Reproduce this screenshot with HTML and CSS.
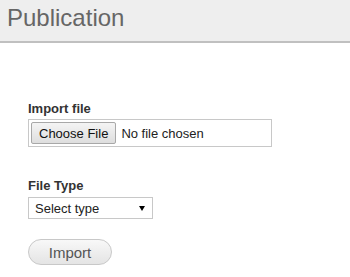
FILE: index.html
```html
<!DOCTYPE html>
<html lang="en">
<head>
    <meta charset="utf-8" />
    <title>Publication</title>
    <link rel="stylesheet" href="styles.css">
</head>
<body>
    <header class="page-header">
        <h1 class="page-title">Publication</h1>
    </header>

    <main class="import-form">
        <div class="form-field">
            <label class="field-label" for="importFile">Import file</label>
            <input class="file-input" id="importFile" type="file" />
        </div>

        <div class="form-field">
            <label class="field-label" for="fileType">File Type</label>
            <span class="select-wrap">
                <select class="type-select" id="fileType">
                    <option>Select type</option>
                    <option>CSV</option>
                    <option>XML</option>
                </select>
            </span>
        </div>

        <button class="import-button" type="button">Import</button>
    </main>
</body>
</html>
```

FILE: styles.css
```css
* {
    margin: 0;
    padding: 0;
    box-sizing: border-box;
}

body {
    font-family: "Liberation Sans", Arial, sans-serif;
    font-size: 13px;
    color: #333;
    background: #fff;
}

.page-header {
    height: 43px;
    background: #eeeeee;
    border-bottom: 2px solid #c0c0c0;
    padding: 4px 7px 0;
}

.page-title {
    font-size: 24px;
    font-weight: normal;
    line-height: 28px;
    color: #666;
}

.import-form {
    padding: 58px 28px 0;
    display: flex;
    flex-direction: column;
    align-items: flex-start;
}

.form-field {
    display: flex;
    flex-direction: column;
    align-items: flex-start;
    margin-bottom: 31px;
}

.form-field + .form-field {
    margin-bottom: 20px;
}

.field-label {
    font-weight: bold;
    line-height: 16px;
    margin-bottom: 2px;
}

.file-input {
    width: 244px;
    height: 28px;
    padding: 2px;
    border: 1px solid #c8c8c8;
    font-family: "Liberation Sans", Arial, sans-serif;
    font-size: 13px;
    color: #222;
}

.file-input::file-selector-button {
    height: 22px;
    padding: 0 7px;
    margin-right: 5px;
    font-family: "Liberation Sans", Arial, sans-serif;
    font-size: 13px;
    color: #111;
    background: linear-gradient(#f4f4f4, #dedede);
    border: 1px solid #a8a8a8;
    border-radius: 2px;
}

.select-wrap {
    position: relative;
    display: inline-block;
    margin-top: 1px;
}

.select-wrap::after {
    content: "";
    position: absolute;
    right: 8px;
    top: 9px;
    border-left: 3px solid transparent;
    border-right: 3px solid transparent;
    border-top: 5px solid #000;
    pointer-events: none;
}

.type-select {
    appearance: none;
    width: 125px;
    height: 22px;
    padding: 0 6px;
    border: 1px solid #c8c8c8;
    border-radius: 0;
    background: #fff;
    font-family: "Liberation Sans", Arial, sans-serif;
    font-size: 13px;
    color: #222;
}

.import-button {
    width: 84px;
    height: 26px;
    border: 1px solid #c8c8c8;
    border-radius: 13px;
    background: linear-gradient(#f8f8f8, #e4e4e4);
    font-family: "Liberation Sans", Arial, sans-serif;
    font-size: 15px;
    color: #555;
    cursor: pointer;
}
```
